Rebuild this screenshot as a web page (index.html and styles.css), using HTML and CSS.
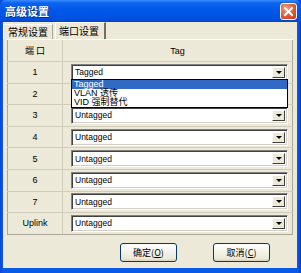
FILE: index.html
```html
<!DOCTYPE html>
<html lang="zh-CN">
<head>
  <meta charset="UTF-8">
  <title>高级设置</title>
  <link rel="stylesheet" href="styles.css">
</head>
<body>
  <div class="window">
    <div class="titlebar">
      <span class="title">高级设置</span>
      <span class="close">
        <svg width="11" height="11" viewBox="0 0 11 11"><path d="M2 2 L9 9 M9 2 L2 9" stroke="#fff" stroke-width="2" stroke-linecap="square"/></svg>
      </span>
    </div>

    <div class="content">
      <div class="tabs">
        <div class="tab">常规设置</div>
        <div class="tab active">端口设置</div>
      </div>

      <div class="panel">
        <table class="grid">
          <thead>
            <tr>
              <th class="port">端 口</th>
              <th>Tag</th>
            </tr>
          </thead>
          <tbody>
            <tr><td class="port">1</td><td><div class="combo open"><span class="val">Tagged</span><span class="arrow"></span></div>
              <!-- open list of port 1 covers the combo of port 2 -->
              <ul class="droplist">
                <li class="sel">Tagged</li>
                <li>VLAN 透传</li>
                <li>VID 强制替代</li>
              </ul>
            </td></tr>
            <tr><td class="port">2</td><td><div class="combo"><span class="val"></span><span class="arrow"></span></div></td></tr>
            <tr><td class="port">3</td><td><div class="combo"><span class="val">Untagged</span><span class="arrow"></span></div></td></tr>
            <tr><td class="port">4</td><td><div class="combo"><span class="val">Untagged</span><span class="arrow"></span></div></td></tr>
            <tr><td class="port">5</td><td><div class="combo"><span class="val">Untagged</span><span class="arrow"></span></div></td></tr>
            <tr><td class="port">6</td><td><div class="combo"><span class="val">Untagged</span><span class="arrow"></span></div></td></tr>
            <tr><td class="port">7</td><td><div class="combo"><span class="val">Untagged</span><span class="arrow"></span></div></td></tr>
            <tr><td class="port">Uplink</td><td><div class="combo"><span class="val">Untagged</span><span class="arrow"></span></div></td></tr>
          </tbody>
        </table>
      </div>

      <div class="buttons">
        <button type="button">确定(<u>O</u>)</button>
        <button type="button">取消(<u>C</u>)</button>
      </div>
    </div>
  </div>
</body>
</html>
```

FILE: styles.css
```css
html, body {
  margin: 0;
  padding: 0;
}

body {
  width: 301px;
  height: 273px;
  overflow: hidden;
  font-family: "Liberation Sans", Arial, "Noto Sans CJK SC", sans-serif;
  font-size: 9px;
  color: #000;
}

.window {
  width: 301px;
  height: 273px;
  box-sizing: border-box;
  display: flex;
  flex-direction: column;
  background: linear-gradient(90deg, #0846d8 0, #0a5ae8 3px, #0a5ae8 298px, #0338c0 301px);
  padding: 0 4px 5px 3px;
}

.titlebar {
  height: 22px;
  margin: 0 -4px 0 -3px;
  padding: 0 4px 0 5px;
  display: flex;
  align-items: center;
  justify-content: space-between;
  background: linear-gradient(#3b8cff 0, #0a62f0 3px, #0058e8 10px, #0052e0 18px, #0046d0 22px);
  border-radius: 6px 6px 0 0;
}

.title {
  color: #fff;
  font-family: "Noto Sans CJK SC", sans-serif;
  font-weight: bold;
  font-size: 11px;
  text-shadow: 1px 1px 0 #0a2a80;
}

.close {
  width: 15px;
  height: 15px;
  display: flex;
  align-items: center;
  justify-content: center;
  background: radial-gradient(circle at 35% 30%, #f49a78, #e0532f 60%, #c83c1c);
  border: 1px solid #fff;
  border-radius: 3px;
}

.content {
  flex: 1;
  background: #ece9d8;
  display: flex;
  flex-direction: column;
}

.tabs {
  display: flex;
  align-items: flex-end;
  height: 17px;
}

.tab {
  font-family: "Noto Sans CJK SC", sans-serif;
  font-size: 10px;
  height: 14px;
  line-height: 14px;
  padding: 0 4px;
  border-top: 1px solid #fff;
  border-left: 1px solid #fff;
  border-right: 1px solid #aca899;
}

.tab.active {
  height: 16px;
  line-height: 15px;
  margin-left: 2px;
  padding: 0 5px 0 3px;
  border-right: 2px solid #716f64;
}

.panel {
  margin: 0 4px;
  border-top: 1px solid #fff;
}

.grid {
  width: 100%;
  border-collapse: collapse;
  table-layout: fixed;
  border-left: 1px solid #aca899;
  border-right: 1px solid #aca899;
}

.grid th {
  font-weight: normal;
  height: 21px;
  font-size: 9px;
  text-align: center;
}

.grid th.port {
  font-family: "Noto Sans CJK SC", sans-serif;
}

.grid th, .grid td {
  border-bottom: 1px solid #d0ccbc;
  border-left: 1px solid #d0ccbc;
  padding: 0;
}

.grid th:first-child, .grid td:first-child {
  border-left: none;
}

.grid .port {
  width: 54px;
  text-align: center;
}

.grid td {
  height: 20.6px;
  position: relative;
}

.grid tbody tr:last-child td {
  border-bottom: 1px solid #aca899;
}

.combo {
  margin: 0 4px 0 8px;
  height: 17px;
  box-sizing: border-box;
  background: #fff;
  border-top: 1px solid #808080;
  border-left: 1px solid #808080;
  border-right: 1px solid #fff;
  border-bottom: 1px solid #fff;
  box-shadow: inset 1px 1px 0 #404040, inset -1px -1px 0 #d4d0c8;
  display: flex;
  align-items: center;
  justify-content: space-between;
  padding: 0 2px 0 3px;
}

.val {
  font-size: 8.5px;
}

.arrow {
  width: 13px;
  height: 11px;
  box-sizing: border-box;
  background: #ece9d8;
  border-top: 1px solid #fff;
  border-left: 1px solid #fff;
  border-right: 1px solid #404040;
  border-bottom: 1px solid #404040;
  display: flex;
  align-items: center;
  justify-content: center;
}

.arrow::after {
  content: "";
  border-left: 3px solid transparent;
  border-right: 3px solid transparent;
  border-top: 3px solid #000;
}

.droplist {
  position: absolute;
  left: 8px;
  right: 4px;
  top: 17px;
  margin: 0;
  padding: 0;
  list-style: none;
  background: #fff;
  border: 1px solid #000;
  z-index: 2;
  font-size: 9px;
}

.droplist li {
  height: 9px;
  line-height: 9px;
  padding: 0 2px;
}

.droplist li.sel {
  background: #316ac5;
  color: #fff;
}

.buttons {
  display: flex;
  justify-content: flex-end;
  gap: 36px;
  padding: 8px 27px 0 0;
}

.buttons button {
  width: 57px;
  height: 19px;
  padding: 0;
  font-family: "Noto Sans CJK SC", sans-serif;
  font-size: 9px;
  background: linear-gradient(#fff, #ece9d8 85%, #d8d2bd);
  border: 1px solid #003c74;
  border-radius: 3px;
  color: #000;
}
```
